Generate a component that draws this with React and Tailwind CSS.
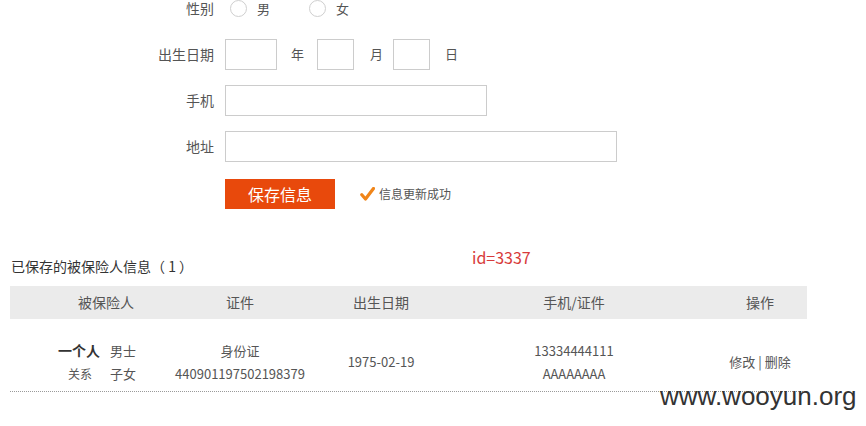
import React from "react";

function Radio({ label, className = "" }) {
  return (
    <div className={"flex items-center " + className}>
      <span className="block w-[17px] h-[17px] rounded-full border border-[#cfcfcf] bg-white" />
      <span className="ml-[10px] text-[13px] text-[#555]">{label}</span>
    </div>
  );
}

function Label({ children, top = false }) {
  return (
    <div className={"w-[214px] text-right text-[14px] text-[#555] " + (top ? "leading-[17px]" : "leading-[20px] -mt-[2px]")}>
      {children}
    </div>
  );
}

export default function App() {
  return (
    <div className="relative w-[866px] h-[426px] bg-white overflow-hidden font-['Noto_Sans_CJK_SC',sans-serif]">
      <div className="flex flex-col">
        {/* gender */}
        <div className="flex items-center h-[17px]">
          <Label top>性别</Label>
          <Radio label="男" className="ml-[16px]" />
          <Radio label="女" className="ml-[39px]" />
        </div>
        {/* birth */}
        <div className="flex items-center h-[31px] mt-[22px]">
          <Label>出生日期</Label>
          <div className="ml-[11px] w-[52px] h-[31px] border border-[#cccccc]" />
          <span className="ml-[14px] text-[13px] text-[#555] -mt-[2px]">年</span>
          <div className="ml-[13px] w-[37px] h-[31px] border border-[#cccccc]" />
          <span className="ml-[16px] text-[13px] text-[#555] -mt-[2px]">月</span>
          <div className="ml-[10px] w-[37px] h-[31px] border border-[#cccccc]" />
          <span className="ml-[15px] text-[13px] text-[#555] -mt-[2px]">日</span>
        </div>
        {/* phone */}
        <div className="flex items-center h-[31px] mt-[15px]">
          <Label>手机</Label>
          <div className="ml-[11px] w-[262px] h-[31px] border border-[#cccccc]" />
        </div>
        {/* address */}
        <div className="flex items-center h-[31px] mt-[15px]">
          <Label>地址</Label>
          <div className="ml-[11px] w-[392px] h-[31px] border border-[#cccccc]" />
        </div>
        {/* button */}
        <div className="flex items-center h-[30px] mt-[17px] pl-[225px]">
          <div className="w-[110px] h-[30px] bg-[#e8490c] text-white text-[16px] flex items-center justify-center">
            保存信息
          </div>
          <svg className="ml-[25px]" width="15" height="14" viewBox="0 0 15 14">
            <path d="M1.8 7.8 L5.5 12 L13.5 1.5" fill="none" stroke="#f08519" strokeWidth="3.2" strokeLinecap="round" strokeLinejoin="round" />
          </svg>
          <span className="ml-[4px] text-[12px] text-[#555]">信息更新成功</span>
        </div>
        {/* title */}
        <div className="mt-[47px] h-[20px] pl-[11px] text-[14px] leading-[20px] text-[#333] whitespace-pre">
          已保存的被保险人信息（ 1 ）
        </div>
        {/* table */}
        <div className="ml-[10px] w-[797px] mt-[10px]">
          <div className="grid grid-cols-[192px_76px_206px_180px_143px] h-[33px] items-center bg-[#ebebeb] text-[14px] text-[#555] text-center">
            <div>被保险人</div>
            <div>证件</div>
            <div>出生日期</div>
            <div>手机/证件</div>
            <div className="pl-[49px]">操作</div>
          </div>
          <div className="grid grid-cols-[192px_76px_206px_180px_143px] h-[73px] pt-[13px] items-center border-b border-dotted border-[#9a9a9a] text-[13px] text-[#555] text-center leading-[23px]">
            <div className="grid grid-cols-[90px_1fr] text-left">
              <div className="text-right font-bold text-[14px] text-[#333]">一个人</div>
              <div className="pl-[10px]">男士</div>
              <div className="text-right pr-[8px] text-[12px]">关系</div>
              <div className="pl-[10px]">子女</div>
            </div>
            <div className="flex flex-col items-center">
              <div className="whitespace-nowrap">身份证</div>
              <div className="whitespace-nowrap">440901197502198379</div>
            </div>
            <div>1975-02-19</div>
            <div className="flex flex-col items-center">
              <div>13334444111</div>
              <div>AAAAAAAA</div>
            </div>
            <div className="pl-[49px] whitespace-nowrap">修改 | 删除</div>
          </div>
        </div>
      </div>
      {/* annotation */}
      <div className="absolute left-[472px] top-[247px] text-[16px] leading-[20px] text-[#d83b3b]">id=3337</div>
      {/* watermark */}
      <div className="absolute left-[660px] top-[383px] text-[26px] leading-none text-[#333] font-['Liberation_Sans',Arial,sans-serif]">
        www.wooyun.org
      </div>
    </div>
  );
}
